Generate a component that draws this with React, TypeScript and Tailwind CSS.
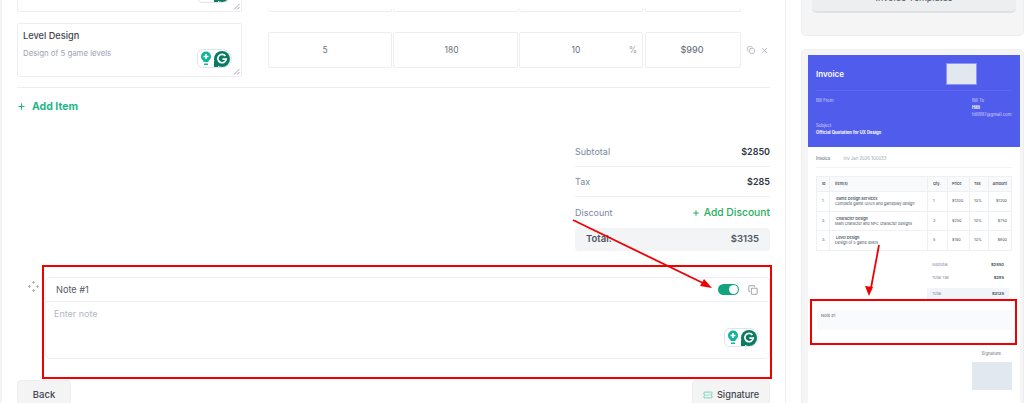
import { Plus, Copy, X, TicketCheck } from "lucide-react";

const rows = [
  { no: "1.", name: "Game Design Services", desc: "Complete game UI/UX and gameplay design", qty: "1", price: "$1200", amount: "$1200" },
  { no: "2.", name: "Character Design", desc: "Main character and NPC character designs", qty: "3", price: "$250", amount: "$750" },
  { no: "3.", name: "Level Design", desc: "Design of 5 game levels", qty: "5", price: "$180", amount: "$900" },
];

function GrammarlyBadge() {
  return (
    <div className="flex h-[19px] w-[35px] items-center justify-center gap-[2px] rounded-l-[6px] rounded-r-[10px] border border-[#dfe3ea] bg-white">
      <svg width="12" height="15" viewBox="0 0 12 15">
        <circle cx="6" cy="5.5" r="5" fill="#12b39a" />
        <path d="M3.5 9h5v2h-5z" fill="#12b39a" />
        <path d="M4 12.5h4v1.5h-4z" fill="#12b39a" />
        <path d="M6 3v5M3.5 5.5h5" stroke="#fff" strokeWidth="1.6" />
      </svg>
      <svg width="16" height="16" viewBox="0 0 16 16">
        <circle cx="8" cy="8" r="8" fill="#0b7a63" />
        <path d="M0 10h4v6H0z" fill="#0b7a63" />
        <path d="M11.4 5a4.2 4.2 0 1 0 .8 3.2H8.4" fill="none" stroke="#fff" strokeWidth="1.7" />
      </svg>
    </div>
  );
}

function Resize() {
  return (
    <svg className="absolute bottom-[1px] right-[1px]" width="7" height="7" viewBox="0 0 7 7">
      <path d="M1 6.5 6.5 1M4 6.5 6.5 4" stroke="#8a8f98" strokeWidth="0.8" />
    </svg>
  );
}

function DragHandle() {
  return (
    <svg width="11" height="11" viewBox="0 0 11 11" fill="none" stroke="#a3a8b2" strokeWidth="0.9">
      <path d="M4 1.8 5.5.5 7 1.8M4 9.2l1.5 1.3L7 9.2M1.8 4 .5 5.5 1.8 7M9.2 4l1.3 1.5L9.2 7" />
      <path d="M5.5.8v2M5.5 8.2v2M.8 5.5h2M8.2 5.5h2" />
    </svg>
  );
}

function NumBox({ className, children }: { className: string; children: React.ReactNode }) {
  return (
    <div className={`relative flex h-[36px] items-center justify-center rounded-[2px] border border-[#eceef1] text-[8.5px] text-[#6b7280] ${className}`}>
      {children}
    </div>
  );
}

function SumRow({ label, value }: { label: string; value: string }) {
  return (
    <div className="flex h-[30px] items-center justify-between border-b border-[#eff0f2] text-[9px]">
      <span className="text-[#7d879c]">{label}</span>
      <span className="font-semibold text-[#2f3643]">{value}</span>
    </div>
  );
}

function Preview() {
  return (
    <div className="ml-[6px] mt-[5px] h-[355px] w-[212px] bg-white text-[#4b5563]">
      <div className="h-[92px] bg-[#505cec] px-[8px] pt-[8px] text-white">
        <div className="flex h-[28px] items-start justify-between border-b border-[#5d68ef]">
          <div className="pt-[5px] text-[8px] font-semibold">Invoice</div>
          <div className="mr-[35px] h-[22px] w-[31px] border border-[#8c95f5] bg-[#e2e8f0]" />
        </div>
        <div className="mt-[6px] flex justify-between text-[4.3px] leading-[7px] text-[#d5d9fb]">
          <span>Bill From</span>
          <div className="w-[40px]">
            <div>Bill To</div>
            <div className="font-bold text-white">Hilli</div>
            <div>hilli997@gmail.com</div>
          </div>
        </div>
        <div className="mt-[4px] text-[4.3px] leading-[7px] text-[#d5d9fb]">Subject</div>
        <div className="text-[4.2px] font-bold leading-[8px]">Official Quotation for UX Design</div>
      </div>
      <div className="mx-[8px] flex h-[21px] items-center gap-[13px] border-b border-[#f1f3f6] pt-[4px] text-[4.3px]">
        <span>Invoice</span>
        <span className="text-[#9aa1ad]">Inv Jan 2026 100033</span>
      </div>
      <div className="mx-[8px] mt-[8px] border border-[#eef0f4] text-[3.8px]">
        <div className="flex h-[14px] items-center bg-[#f8fafc] font-semibold">
          <span className="flex h-full w-[12px] items-center pl-[5px]">Id</span>
          <span className="flex h-full w-[98px] items-center border-l border-[#eef0f4] pl-[5px]">Item(s)</span>
          <span className="flex h-full w-[20px] items-center border-l border-[#eef0f4] pl-[5px]">Qty.</span>
          <span className="flex h-full w-[22px] items-center border-l border-[#eef0f4] pl-[4px]">Price</span>
          <span className="flex h-full w-[19px] items-center border-l border-[#eef0f4] pl-[4px]">Tax</span>
          <span className="flex h-full flex-1 items-center justify-end border-l border-[#eef0f4] pr-[4px]">Amount</span>
        </div>
        {rows.map((r) => (
          <div key={r.no} className="flex h-[19.5px] items-center border-t border-[#eef0f4]">
            <span className="flex h-full w-[12px] items-center pl-[5px]">{r.no}</span>
            <div className="flex h-full w-[98px] flex-col justify-center border-l border-[#eef0f4] pl-[5px] leading-[5px]">
              <div className="pl-[1px] font-semibold">{r.name}</div>
              <div>{r.desc}</div>
            </div>
            <span className="flex h-full w-[20px] items-center border-l border-[#eef0f4] pl-[5px]">{r.qty}</span>
            <span className="flex h-full w-[22px] items-center border-l border-[#eef0f4] pl-[4px]">{r.price}</span>
            <span className="flex h-full w-[19px] items-center border-l border-[#eef0f4] pl-[4px]">10%</span>
            <span className="flex h-full flex-1 items-center justify-end border-l border-[#eef0f4] pr-[4px]">{r.amount}</span>
          </div>
        ))}
      </div>
      <div className="ml-[119px] mr-[11px] mt-[8px] text-[4px]">
        <div className="flex h-[13px] items-center justify-between px-[5px]">
          <span className="text-[#7d879c]">Subtotal</span>
          <b>$2850</b>
        </div>
        <div className="flex h-[13px] items-center justify-between px-[5px]">
          <span className="text-[#7d879c]">Total Tax</span>
          <b>$285</b>
        </div>
        <div className="mt-[3px] flex h-[13px] items-center justify-between bg-[#f1f5f9] px-[5px]">
          <span className="text-[#7d879c]">Total</span>
          <b>$3135</b>
        </div>
      </div>
      <div className="ml-[9px] mr-[8px] mt-[9px] h-[20px] rounded-[1px] bg-[#f8fafc] px-[4px] pt-[3px] text-[4px]">Note #1</div>
      <div className="mr-[8px] mt-[21px] flex flex-col items-end text-[4.3px] leading-[6px] text-[#6b7280]">
        <span className="mr-[11px]">Signature</span>
        <div className="mt-[5px] h-[28px] w-[40px] bg-[#e2e8f0]" />
      </div>
    </div>
  );
}

export default function App() {
  return (
    <div className="relative flex h-[403px] w-[1024px] overflow-hidden bg-white font-['Inter',sans-serif]">
      <div className="w-[2px] shrink-0 bg-[#f4f4f5]" />

      <main className="w-[784px] shrink-0 border-r border-[#eeeff1] pl-[15px] pr-[15px]">
        <div className="flex h-[12px] items-end">
          <div className="relative h-[12px] w-[225px] rounded-b-[2px] border border-t-0 border-[#eceef1]">
            <div className="absolute bottom-[8px] right-[9px]">
              <GrammarlyBadge />
            </div>
            <Resize />
          </div>
          <div className="ml-[26px] flex items-end gap-[1px]">
            <div className="h-[3px] w-[124px] rounded-b-[2px] border border-t-0 border-[#eceef1]" />
            <div className="h-[3px] w-[125px] rounded-b-[2px] border border-t-0 border-[#eceef1]" />
            <div className="h-[3px] w-[124px] rounded-b-[2px] border border-t-0 border-[#eceef1]" />
            <div className="ml-[1px] h-[3px] w-[96px] rounded-b-[2px] border border-t-0 border-[#eceef1]" />
          </div>
        </div>

        <div className="mt-[11px] flex items-start">
          <div className="relative h-[54px] w-[225px] rounded-[2px] border border-[#eceef1] px-[5px] pt-[5px]">
            <div className="text-[9.2px] font-medium leading-[14px] text-[#3f4450]">Level Design</div>
            <div className="mt-[4px] text-[7.8px] leading-[12px] text-[#9ca3af]">Design of 5 game levels</div>
            <div className="absolute bottom-[8px] right-[9px]">
              <GrammarlyBadge />
            </div>
            <Resize />
          </div>
          <div className="ml-[26px] mt-[9px] flex items-center gap-[1px]">
            <NumBox className="w-[124px]">
              <span className="-ml-[10px]">5</span>
            </NumBox>
            <NumBox className="w-[125px]">
              <span className="-ml-[8px]">180</span>
            </NumBox>
            <NumBox className="w-[124px]">
              <span className="-ml-[10px]">10</span>
              <span className="absolute right-[5px] text-[#9ca3af]">%</span>
            </NumBox>
            <NumBox className="ml-[1px] w-[96px] text-[9px] font-medium">
              <span className="-ml-[2px]">$990</span>
            </NumBox>
            <Copy className="ml-[5px] h-[8px] w-[8px] text-[#9ca3af]" />
            <X className="ml-[4px] h-[9px] w-[9px] text-[#9ca3af]" />
          </div>
        </div>

        <div className="mt-[10px] w-[753px] border-t border-[#eceef1]" />

        <div className="mt-[11px] flex h-[15px] items-center text-[10.5px] font-bold text-[#1fb58a]">
          <Plus className="mr-[6px] h-[9px] w-[9px]" strokeWidth={3} />
          Add Item
        </div>

        <div className="ml-[558px] mt-[23px] w-[195px]">
          <SumRow label="Subtotal" value="$2850" />
          <SumRow label="Tax" value="$285" />
          <div className="flex h-[31px] items-center justify-between text-[9px]">
            <span className="text-[#7d879c]">Discount</span>
            <span className="flex items-center gap-[4px] text-[10.3px] font-medium text-[#27ae60]">
              <Plus className="h-[8px] w-[8px]" strokeWidth={3} />
              Add Discount
            </span>
          </div>
          <div className="flex h-[23px] items-center justify-between rounded-[4px] bg-[#f3f4f6] px-[11px] text-[9.5px] font-semibold text-[#4b5563]">
            <span>Total:</span>
            <span>$3135</span>
          </div>
        </div>

        <div className="mt-[26px] flex items-start">
          <div className="ml-[11px] mt-[4px]">
            <DragHandle />
          </div>
          <div className="ml-[6px] h-[82px] w-[725px] rounded-[5px] border border-[#eceef1]">
            <div className="flex h-[24px] items-center justify-between border-b border-[#eceef1] pl-[10px] pr-[11px] text-[9.2px] text-[#565c68]">
              <span>Note #1</span>
              <div className="flex items-center gap-[9px]">
                <div className="flex h-[11px] w-[21px] items-center justify-end rounded-full bg-[#12a37f] pr-[1px]">
                  <div className="h-[9px] w-[9px] rounded-full bg-white" />
                </div>
                <Copy className="h-[10px] w-[10px] text-[#a3a8b2]" strokeWidth={2.5} />
              </div>
            </div>
            <div className="relative px-[8px] pt-[6px] text-[9px] leading-[12px] text-[#b3b8c2]">
              Enter note
              <div className="absolute right-[10px] top-[26px]">
                <GrammarlyBadge />
              </div>
            </div>
          </div>
        </div>

        <div className="mt-[21px] flex items-start justify-between">
          <div className="flex h-[30px] w-[54px] justify-center rounded-[4px] border border-[#eceef1] bg-[#f4f4f5] pt-[7px] text-[9.5px] font-medium text-[#3f4450]">
            Back
          </div>
          <div className="flex h-[30px] w-[78px] justify-center gap-[4px] rounded-[4px] border border-[#eceef1] bg-[#f4f4f5] pt-[7px] text-[9.2px] font-medium text-[#3f4450]">
            <TicketCheck className="mt-[2px] h-[10px] w-[10px] text-[#5fd0ac]" />
            Signature
          </div>
        </div>
      </main>

      <aside className="ml-[15px] flex-1">
        <div className="h-[36px] rounded-b-[5px] border border-t-0 border-[#eceef1] bg-[#f5f5f5] pl-[10px] pr-[2px]">
          <div className="flex h-[13px] w-[204px] justify-center overflow-hidden rounded-b-[5px] border-b-2 border-[#dfe1e5] bg-[#eceef0] text-[9px] leading-[10px] text-[#4b5563]">
            <span className="-mt-[7px]">Invoice Templates</span>
          </div>
        </div>
        <div className="mt-[13px] h-[360px] rounded-[5px] border border-[#eceef1] bg-[#f5f5f5]">
          <Preview />
        </div>
      </aside>

      {/* annotations */}
      <div className="absolute left-[42px] top-[265px] h-[114px] w-[730px] border-2 border-[#f00000]" />
      <div className="absolute left-[810px] top-[299px] h-[46px] w-[207px] border-2 border-[#f00000]" />
      <svg className="absolute left-0 top-0" width="1024" height="403" viewBox="0 0 1024 403">
        <path d="M573 220 705 284" stroke="#f00000" strokeWidth="1.8" />
        <path d="M712 288 700 286 704 279z" fill="#f00000" />
        <path d="M879 245 871 288" stroke="#f00000" strokeWidth="1.8" />
        <path d="M869 296 865 286 873 287z" fill="#f00000" />
      </svg>
    </div>
  );
}
